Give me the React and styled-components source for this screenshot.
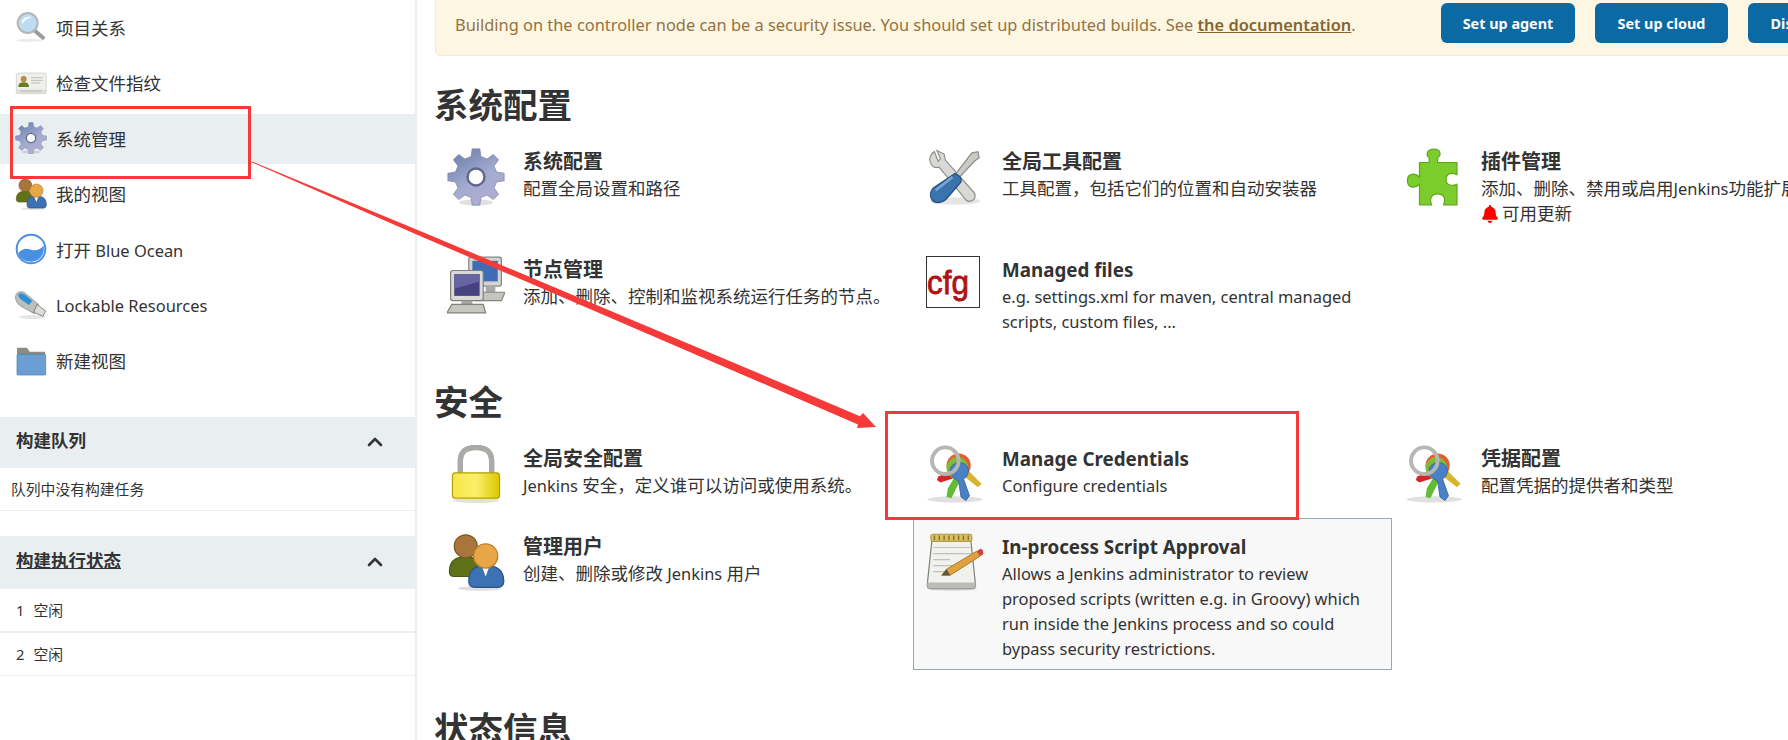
import React from 'react';
import styled, { createGlobalStyle } from 'styled-components';
import { ChevronUp } from 'lucide-react';
import { FaBell } from 'react-icons/fa';

const GlobalStyle = createGlobalStyle`
  html, body {
    margin: 0;
    padding: 0;
    height: 100%;
    overflow: hidden;
    background: #fff;
  }
  body {
    font-family: "Noto Sans", "Noto Sans CJK SC", sans-serif;
    color: #333;
  }
`;

const Page = styled.div`
  position: relative;
  display: flex;
  width: 1788px;
  height: 740px;
  overflow: hidden;
`;

/* latin runs sit a little smaller than the CJK text around them */
const LatinRun = styled.span`
  font-size: 0.94em;
`;

const Mixed = ({ text }) =>
  text
    .split(/([\u0000-\u024f]+)/)
    .map((part, i) => (/^[\u0000-\u024f]+$/.test(part) ? <LatinRun key={i}>{part}</LatinRun> : part));

/* sidebar */
const Sidebar = styled.aside`
  flex: 0 0 417px;
  box-sizing: border-box;
  border-right: 2px solid #e9eef1;
`;

const NavList = styled.nav`
  display: flex;
  flex-direction: column;
  gap: 5.6px;
  padding-top: 3px;
`;

const NavItem = styled.a`
  display: flex;
  align-items: center;
  gap: 9px;
  height: 50px;
  box-sizing: border-box;
  padding: 0 0 2px 15px;
  font-size: 17.5px;
  background: ${(p) => (p.$active ? '#e9eef1' : 'transparent')};
`;

const NavLabel = styled.span`
  white-space: pre;
`;

const NavIcon = styled.span`
  display: flex;
  width: 32px;
  height: 32px;
  flex: none;
`;

const Panel = styled.section`
  margin-top: ${(p) => p.$top}px;
`;

const PanelHeader = styled.header`
  display: flex;
  align-items: center;
  justify-content: space-between;
  height: ${(p) => p.$height}px;
  padding: 0 28px 0 16px;
  background: #e9eef1;
`;

const PanelTitle = styled.h3`
  margin: 0 0 6px;
  font-size: 17.5px;
  font-weight: 700;
  text-decoration: ${(p) => (p.$link ? 'underline' : 'none')};
`;

const PanelRow = styled.div`
  display: flex;
  align-items: center;
  gap: 9px;
  height: 42px;
  padding-left: ${(p) => p.$left}px;
  font-size: 14.8px;
  border-bottom: ${(p) => p.$rule}px solid #e9eef1;
`;

/* main column */
const Main = styled.main`
  flex: 1;
  min-width: 0;
  padding-left: 17px;
`;

const Banner = styled.div`
  display: flex;
  align-items: flex-start;
  width: 1500px;
  height: 56px;
  box-sizing: border-box;
  margin-left: 1px;
  padding: 3px 0 0 19px;
  gap: 20px;
  background: #fdf6e3;
  border: 1px solid #fbe9c8;
  border-top: none;
  border-radius: 0 0 0 6px;
`;

const BannerText = styled.p`
  margin: 0;
  width: 966px;
  flex: none;
  line-height: 44px;
  font-size: 16.4px;
  color: #94733f;
  white-space: nowrap;
`;

const BannerLink = styled.a`
  font-weight: 600;
  color: #86652f;
  text-decoration: underline;
`;

const BannerButton = styled.button`
  flex: none;
  width: ${(p) => p.$width}px;
  height: 40px;
  border: none;
  border-radius: 6px;
  padding: 0;
  background: #0b69a3;
  color: #fff;
  font: 700 14.4px "Noto Sans", sans-serif;
`;

const SectionHeading = styled.h2`
  margin: ${(p) => p.$top}px 0 5px;
  font-size: 34.5px;
  line-height: 46px;
  font-weight: 700;
  color: #333;
`;

const TileGrid = styled.div`
  display: grid;
  grid-template-columns: repeat(3, 479px);
  row-gap: ${(p) => p.$rowGap}px;
`;

const Tile = styled.a`
  display: flex;
  align-items: flex-start;
  box-sizing: border-box;
  min-height: 88px;
  padding: 14px 12px 8px 12px;
  border: 1px solid ${(p) => (p.$hovered ? '#9aa8b2' : 'transparent')};
  background: ${(p) => (p.$hovered ? '#f8f8f8' : 'transparent')};
`;

const TileIcon = styled.span`
  display: flex;
  flex: none;
  width: 58px;
  height: 58px;
  margin-right: 18px;
`;

const TileText = styled.div`
  min-width: 0;
  margin-right: -6px;
`;

const TileTitle = styled.div`
  font-size: ${(p) => (p.$latin ? 18.8 : 20)}px;
  line-height: 28px;
  font-weight: 700;
`;

const TileDesc = styled.div`
  font-size: 17.5px;
  line-height: 25px;
`;

const UpdateNote = styled.div`
  display: flex;
  align-items: center;
  gap: 3px;
  font-size: 17.5px;
  line-height: 25px;
`;

/* red annotations drawn on top of the screenshot */
const NavCallout = styled.div`
  position: absolute;
  left: 10px;
  top: 106px;
  width: 241px;
  height: 73px;
  box-sizing: border-box;
  border: 3px solid #f63a3a;
`;

const TileCallout = styled.div`
  position: absolute;
  left: 885px;
  top: 411px;
  width: 414px;
  height: 109px;
  box-sizing: border-box;
  border: 3px solid #f63a3a;
`;

const ArrowOverlay = styled.svg`
  position: absolute;
  left: 0;
  top: 0;
  pointer-events: none;
`;

/* icons */
const gearPath = (() => {
  const points = [];
  const teeth = 8;
  for (let i = 0; i < teeth; i++) {
    const mid = (i / teeth) * Math.PI * 2 - Math.PI / 2;
    const step = (Math.PI * 2) / teeth;
    [
      [17.5, -0.3],
      [23.5, -0.17],
      [23.5, 0.17],
      [17.5, 0.3],
    ].forEach(([r, k]) => {
      const a = mid + k * step;
      points.push(`${(24 + r * Math.cos(a)).toFixed(2)} ${(24 + r * Math.sin(a)).toFixed(2)}`);
    });
  }
  return `M${points.join('L')}Z`;
})();

const Svg = ({ children }) => (
  <svg viewBox="0 0 48 48" width="100%" height="100%">
    {children}
  </svg>
);

const GearIcon = () => (
  <Svg>
    <defs>
      <linearGradient id="gearFill" x1="0.2" y1="0" x2="0.8" y2="1">
        <stop offset="0" stopColor="#6d80ad" />
        <stop offset="0.55" stopColor="#a3acd0" />
        <stop offset="1" stopColor="#b4acd4" />
      </linearGradient>
    </defs>
    <ellipse cx="24" cy="45" rx="14" ry="2.5" fill="#000" opacity="0.12" />
    <path d={gearPath} fill="url(#gearFill)" stroke="#7d86a8" strokeWidth="0.6" />
    <circle cx="24" cy="24" r="7" fill="#fff" stroke="#5f6887" strokeWidth="2" />
  </Svg>
);

const ToolsIcon = () => (
  <Svg>
    <ellipse cx="24" cy="44" rx="21" ry="3" fill="#000" opacity="0.1" />
    <path d="M7 3 C2 6 2 13 7 16 L11 16 L33 43 C35 45 39 44 40 42 C41 40 41 38 39 36 L16 10 L15 5 L9 2 L12 9 L10 11 Z" fill="#d8d9d6" stroke="#8f928c" strokeWidth="1" />
    <path d="M38 4 L43 3 L44 8 L40 11 L27 25 L24 22 Z" fill="#c9cbc6" stroke="#8b8d88" strokeWidth="1" />
    <path d="M24 21 C28 23 30 25 29 28 L17 42 C13 46 7 46 5 43 C3 40 3 36 6 33 Z" fill="#3a74ae" stroke="#264f7d" strokeWidth="1" />
    <path d="M8 35 L22 24" stroke="#7ba7d3" strokeWidth="2" />
  </Svg>
);

const PuzzleIcon = () => (
  <Svg>
    <path d="M20 12 L20 8 C17 6 18 1 24 1 C30 1 30 6 27 8 L27 12 L43 12 L43 22 C38 20 34 21 34 26 C34 31 39 32 43 30 L43 47 L32 47 C34 42 32 38 27 38 C22 38 20 42 22 47 L12 47 L12 30 C8 34 2 33 2 27 C2 21 8 20 12 24 L12 12 Z" fill="#7ccc2c" stroke="#5fa71f" strokeWidth="1" />
  </Svg>
);

const NodesIcon = () => (
  <Svg>
    <rect x="18" y="1" width="27" height="24" rx="2" fill="#d4d5d2" stroke="#85867f" />
    <rect x="21" y="4" width="21" height="17" fill="#3f6cb4" />
    <path d="M32 25 h8 v5 h-8z" fill="#aaa" />
    <path d="M24 30 h24 l-3 7 h-21z" fill="#c5c5c0" stroke="#85867f" />
    <rect x="3" y="12" width="27" height="25" rx="2" fill="#d9dad6" stroke="#7f8079" />
    <rect x="6" y="15" width="21" height="18" fill="#45427f" />
    <path d="M6 15 h21 v6 l-21 6z" fill="#6764a3" />
    <path d="M12 37 h9 v3 h-9z" fill="#a6a6a1" />
    <path d="M4 40 h26 l2 7 h-32z" fill="#c7c7c2" stroke="#7f8079" />
  </Svg>
);

const CfgIcon = () => (
  <svg viewBox="0 0 54 52" width="54" height="52">
    <rect x="0.5" y="0.5" width="53" height="51" fill="#fff" stroke="#333" />
    <text x="1" y="38" textLength="42" lengthAdjust="spacingAndGlyphs" fontFamily="'Liberation Sans', sans-serif" fontSize="34" fill="#b11116" stroke="#b11116" strokeWidth="0.8">cfg</text>
  </svg>
);

const LockIcon = () => (
  <Svg>
    <defs>
      <linearGradient id="lockFill" x1="0" y1="0" x2="1" y2="0">
        <stop offset="0" stopColor="#f5e64b" />
        <stop offset="0.5" stopColor="#fbf06a" />
        <stop offset="1" stopColor="#dcc600" />
      </linearGradient>
    </defs>
    <ellipse cx="24" cy="46" rx="19" ry="2" fill="#000" opacity="0.12" />
    <path d="M11 24 V14 C11 5 16 2 24 2 C32 2 37 5 37 14 V24" fill="none" stroke="#a9aba6" strokeWidth="4.5" />
    <rect x="4.5" y="23" width="39" height="21" rx="2.5" fill="url(#lockFill)" stroke="#b2a100" />
  </Svg>
);

const UsersIcon = () => (
  <Svg>
    <ellipse cx="27" cy="46" rx="18" ry="2" fill="#000" opacity="0.12" />
    <path d="M2 32 C2 21 9 20 16 20 C24 20 29 22 29 36 H6 C3 36 2 34 2 32Z" fill="#5f7119" stroke="#4c5a13" />
    <circle cx="15.5" cy="11" r="9.5" fill="#a8763a" stroke="#7c5526" />
    <path d="M18 40 C18 30 23 27 32 27 C41 27 47 30 47 40 C47 44 45 45 42 45 H23 C20 45 18 44 18 40Z" fill="#3c72b3" stroke="#2a5287" />
    <path d="M29 28 L32 36 L35 28Z" fill="#fff" />
    <circle cx="32" cy="19" r="10" fill="#e8a746" stroke="#bb7c25" />
  </Svg>
);

const KeysIcon = () => (
  <Svg>
    <ellipse cx="24" cy="45" rx="23" ry="2.5" fill="#000" opacity="0.12" />
    <path d="M20 22 L10 26 L9 29 L12 31 L24 27Z" fill="#d3282a" />
    <path d="M24 26 L18 36 L17 43 L21 44 L29 28Z" fill="#61bd34" />
    <path d="M34 20 L46 32 L43 35 L29 24Z" fill="#d9b52f" />
    <circle cx="27" cy="17" r="10" fill="#e55b2e" />
    <circle cx="26" cy="19" r="9" fill="#7fba3a" />
    <path d="M20 21 C20 13 35 12 35 21 C35 25 33 27 31 28 L36 42 L33 46 L29 43 L27 30 C23 28 20 25 20 21Z" fill="#4a80c6" stroke="#34619e" strokeWidth="0.7" />
    <circle cx="16" cy="13" r="11" fill="none" stroke="#b5b7b3" strokeWidth="3.2" />
  </Svg>
);

const NotepadIcon = () => (
  <Svg>
    <ellipse cx="22" cy="46" rx="20" ry="2" fill="#000" opacity="0.1" />
    <path d="M5 5 H37 L41 43 C41 45 40 46 38 46 H4 C2 46 1 45 1 43Z" fill="#f1f1ee" stroke="#7f807b" />
    <path d="M1 41 H41 V43 C41 45 40 46 38 46 H4 C2 46 1 45 1 43Z" fill="#bcbcb7" />
    <rect x="4" y="1" width="34" height="6" rx="1.5" fill="#d9bf5d" stroke="#94802e" strokeWidth="0.6" />
    <path d="M7 2v4M11 2v4M15 2v4M19 2v4M23 2v4M27 2v4M31 2v4M35 2v4" stroke="#8a7427" strokeWidth="1.2" />
    <path d="M6 12H37M6 17H37M6 22H20M6 27H27M6 32H22" stroke="#bfc1bd" strokeWidth="1" />
    <path d="M13 35 L17 30 L42 15 L45 19 L20 35Z" fill="#dfa23e" stroke="#9b6c1e" strokeWidth="0.7" />
    <path d="M42 15 L45 13 C47 13 48 16 47 18 L45 19Z" fill="#d7413d" />
    <path d="M13 35 L17 30 L20 35Z" fill="#5d5148" />
  </Svg>
);

const SearchIcon = () => (
  <Svg>
    <ellipse cx="22" cy="44" rx="20" ry="2.5" fill="#000" opacity="0.08" />
    <path d="M28 28 L42 40" stroke="#9a9c99" strokeWidth="6" strokeLinecap="round" />
    <circle cx="19" cy="18" r="15" fill="#bcdcf3" stroke="#b5b7b3" strokeWidth="3" />
    <path d="M10 16 C12 9 20 7 26 10 C20 10 14 13 12 20Z" fill="#fff" opacity="0.85" />
  </Svg>
);

const CardIcon = () => (
  <Svg>
    <rect x="2" y="9" width="45" height="31" rx="3" fill="#efefec" stroke="#c9c9c6" />
    <rect x="2" y="34" width="45" height="6" fill="#dcdcd8" />
    <circle cx="13" cy="18" r="4.5" fill="#bd8a3e" />
    <path d="M5 30 C5 24 9 23 13 23 C17 23 21 24 21 30Z" fill="#6e7a23" />
    <path d="M24 16H42M24 20H42M24 24H38M8 36H40" stroke="#b8b9b5" strokeWidth="1.4" />
  </Svg>
);

const OceanIcon = () => (
  <Svg>
    <circle cx="24" cy="24" r="21.5" fill="#fff" stroke="#4a90e2" strokeWidth="3" />
    <path d="M5 30 C12 22 18 23 24 25 C30 27 37 26 43 19 C45 30 38 43 24 43 C14 43 7 38 5 30Z" fill="#4a90e2" />
  </Svg>
);

const UsbIcon = () => (
  <Svg>
    <ellipse cx="26" cy="42" rx="20" ry="3" fill="#000" opacity="0.1" />
    <path d="M1 10 C3 3 10 3 15 6 L35 23 L29 37 L9 26 C3 22 0 16 1 10Z" fill="#bcbfbc" stroke="#80827e" />
    <path d="M5 8 C8 5 13 7 17 10 L26 18 L21 24 L8 15 C6 13 4 10 5 8Z" fill="#2f8fd6" />
    <path d="M33 23 L46 33 L42 41 L28 35Z" fill="#dcdcd8" stroke="#555" />
  </Svg>
);

const FolderIcon = () => (
  <Svg>
    <path d="M3 4 H18 L22 10 H45 V44 H3Z" fill="#8d8d88" />
    <rect x="3" y="14" width="43" height="31" rx="1.5" fill="#6b9ed2" stroke="#4779ad" />
  </Svg>
);

const navItems = [
  { label: '项目关系', icon: <SearchIcon /> },
  { label: '检查文件指纹', icon: <CardIcon /> },
  { label: '系统管理', icon: <GearIcon />, active: true },
  { label: '我的视图', icon: <UsersIcon /> },
  { label: '打开 Blue Ocean', icon: <OceanIcon /> },
  { label: 'Lockable Resources', icon: <UsbIcon /> },
  { label: '新建视图', icon: <FolderIcon /> },
];

const systemTiles = [
  { title: '系统配置', desc: '配置全局设置和路径', icon: <GearIcon /> },
  { title: '全局工具配置', desc: '工具配置，包括它们的位置和自动安装器', icon: <ToolsIcon /> },
  { title: '插件管理', desc: '添加、删除、禁用或启用Jenkins功能扩展。', icon: <PuzzleIcon />, update: true },
  { title: '节点管理', desc: '添加、删除、控制和监视系统运行任务的节点。', icon: <NodesIcon /> },
  { title: 'Managed files', latin: true, desc: 'e.g. settings.xml for maven, central managed scripts, custom files, ...', icon: <CfgIcon /> },
];

const securityTiles = [
  { title: '全局安全配置', desc: 'Jenkins 安全，定义谁可以访问或使用系统。', icon: <LockIcon /> },
  { title: 'Manage Credentials', latin: true, desc: 'Configure credentials', icon: <KeysIcon /> },
  { title: '凭据配置', desc: '配置凭据的提供者和类型', icon: <KeysIcon /> },
  { title: '管理用户', desc: '创建、删除或修改 Jenkins 用户', icon: <UsersIcon /> },
  {
    title: 'In-process Script Approval',
    latin: true,
    hovered: true,
    desc: 'Allows a Jenkins administrator to review proposed scripts (written e.g. in Groovy) which run inside the Jenkins process and so could bypass security restrictions.',
    icon: <NotepadIcon />,
  },
];

const TileList = ({ tiles, rowGap }) => (
  <TileGrid $rowGap={rowGap}>
    {tiles.map((t) => (
      <Tile key={t.title} $hovered={t.hovered}>
        <TileIcon>{t.icon}</TileIcon>
        <TileText>
          <TileTitle $latin={t.latin}>{t.title}</TileTitle>
          <TileDesc><Mixed text={t.desc} /></TileDesc>
          {t.update && (
            <UpdateNote>
              <FaBell color="#f00" size={18} />
              可用更新
            </UpdateNote>
          )}
        </TileText>
      </Tile>
    ))}
  </TileGrid>
);

export default function App() {
  return (
    <Page>
      <GlobalStyle />
      <Sidebar>
        <NavList>
          {navItems.map((item) => (
            <NavItem key={item.label} $active={item.active}>
              <NavIcon>{item.icon}</NavIcon>
              <NavLabel><Mixed text={item.label} /></NavLabel>
            </NavItem>
          ))}
        </NavList>
        <Panel $top={30}>
          <PanelHeader $height={51}>
            <PanelTitle>构建队列</PanelTitle>
            <ChevronUp size={24} strokeWidth={2.6} />
          </PanelHeader>
          <PanelRow $left={11} $rule={1}>队列中没有构建任务</PanelRow>
        </Panel>
        <Panel $top={25}>
          <PanelHeader $height={53}>
            <PanelTitle $link>构建执行状态</PanelTitle>
            <ChevronUp size={24} strokeWidth={2.6} />
          </PanelHeader>
          <PanelRow $left={16} $rule={2}><span>1</span>空闲</PanelRow>
          <PanelRow $left={16} $rule={1}><span>2</span>空闲</PanelRow>
        </Panel>
      </Sidebar>
      <Main>
        <Banner>
          <BannerText>
            Building on the controller node can be a security issue. You should set up distributed builds. See{' '}
            <BannerLink>the documentation</BannerLink>.
          </BannerText>
          <BannerButton $width={134}>Set up agent</BannerButton>
          <BannerButton $width={133}>Set up cloud</BannerButton>
          <BannerButton $width={100}>Dismiss</BannerButton>
        </Banner>
        <SectionHeading $top={26}>系统配置</SectionHeading>
        <TileList tiles={systemTiles} rowGap={6} />
        <SectionHeading $top={36}>安全</SectionHeading>
        <TileList tiles={securityTiles} rowGap={0} />
        <SectionHeading $top={36}>状态信息</SectionHeading>
      </Main>
      <NavCallout />
      <TileCallout />
      <ArrowOverlay width="1788" height="740" viewBox="0 0 1788 740">
        <polygon
          points="252,161.5 420,230.9 710,352.7 860,416.2 863,413 876,427 857,428 858,424.5 710,360.7 420,235.9 252,162.5"
          fill="#f63a3a"
        />
      </ArrowOverlay>
    </Page>
  );
}
